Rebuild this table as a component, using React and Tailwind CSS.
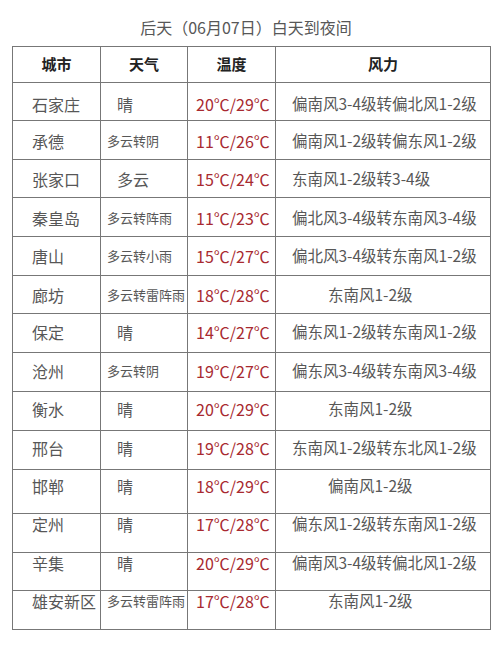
import React from 'react';

// 列定义：城市 / 天气 / 温度 / 风力
const rows = [
  { city: '石家庄', w: '晴', temp: '20℃/29℃', wind: '偏南风3-4级转偏北风1-2级', h: 'h-[38px]', pt: 'pt-[11px]' },
  { city: '承德', w: '多云转阴', temp: '11℃/26℃', wind: '偏南风1-2级转偏东风1-2级', h: 'h-[39px]', pt: 'pt-[10px]' },
  { city: '张家口', w: '多云', temp: '15℃/24℃', wind: '东南风1-2级转3-4级', h: 'h-[38px]', pt: 'pt-[9px]' },
  { city: '秦皇岛', w: '多云转阵雨', temp: '11℃/23℃', wind: '偏北风3-4级转东南风3-4级', h: 'h-[39px]', pt: 'pt-[10px]' },
  { city: '唐山', w: '多云转小雨', temp: '15℃/27℃', wind: '偏北风3-4级转东南风1-2级', h: 'h-[39px]', pt: 'pt-[9px]' },
  { city: '廊坊', w: '多云转雷阵雨', temp: '18℃/28℃', wind: '东南风1-2级', short: true, h: 'h-[38px]', pt: 'pt-[9px]' },
  { city: '保定', w: '晴', temp: '14℃/27℃', wind: '偏东风1-2级转东南风1-2级', h: 'h-[39px]', pt: 'pt-[8px]' },
  { city: '沧州', w: '多云转阴', temp: '19℃/27℃', wind: '偏东风3-4级转东南风3-4级', h: 'h-[39px]', pt: 'pt-[8px]' },
  { city: '衡水', w: '晴', temp: '20℃/29℃', wind: '东南风1-2级', short: true, h: 'h-[39px]', pt: 'pt-[7px]' },
  { city: '邢台', w: '晴', temp: '19℃/28℃', wind: '东南风1-2级转东北风1-2级', h: 'h-[39px]', pt: 'pt-[7px]' },
  { city: '邯郸', w: '晴', temp: '18℃/29℃', wind: '偏南风1-2级', short: true, h: 'h-[44px]', pt: 'pt-[6px]' },
  { city: '定州', w: '晴', temp: '17℃/28℃', wind: '偏东风1-2级转东南风1-2级', h: 'h-[39px]', pt: 'pt-0' },
  { city: '辛集', w: '晴', temp: '20℃/29℃', wind: '偏南风3-4级转偏北风1-2级', h: 'h-[38px]', pt: 'pt-0' },
  { city: '雄安新区', w: '多云转雷阵雨', temp: '17℃/28℃', wind: '东南风1-2级', short: true, h: 'h-[39px]', pt: 'pt-0' },
];

const grid = 'grid grid-cols-[88px_87px_88px_215px]';

function Row({ r }) {
  const small = r.w.length > 2;
  return (
    <div className={`${grid} ${r.h} border-b border-[#777]`}>
      <div className={`border-r border-[#777] pl-[19px] ${r.pt}`}>
        <div className="h-[20px] flex items-center text-[16px]">{r.city}</div>
      </div>
      <div className={`border-r border-[#777] ${small ? 'pl-[6px]' : 'pl-[16px]'} ${r.pt}`}>
        <div className={`h-[20px] flex items-center ${small ? 'text-[13px]' : 'text-[16px]'}`}>{r.w}</div>
      </div>
      <div className={`border-r border-[#777] pl-[8px] ${r.pt}`}>
        <div className="h-[20px] flex items-center text-[16px] text-[#a82a30]">{r.temp}</div>
      </div>
      <div className={`border-r border-[#777] ${r.short ? 'pl-[52px]' : 'pl-[16px]'} ${r.pt}`}>
        <div className="h-[20px] flex items-center text-[15.5px]">{r.wind}</div>
      </div>
    </div>
  );
}

export default function App() {
  return (
    <div
      className="w-[500px] h-[646px] bg-white text-[#575757] overflow-hidden"
      style={{ fontFamily: '"Noto Sans CJK SC", sans-serif' }}
    >
      <div className="h-[46px] pt-[17px] pr-[8px] text-center text-[16px] leading-[20px]">
        后天（06月07日）白天到夜间
      </div>
      <div className="ml-[12px] w-[479px] border-l border-t border-[#777]">
        <div className={`${grid} h-[36px] border-b border-[#777] font-bold text-[15px] text-[#222]`}>
          <div className="border-r border-[#777] flex items-center justify-center">城市</div>
          <div className="border-r border-[#777] flex items-center justify-center">天气</div>
          <div className="border-r border-[#777] flex items-center justify-center">温度</div>
          <div className="border-r border-[#777] flex items-center justify-center">风力</div>
        </div>
        {rows.map((r) => (
          <Row key={r.city} r={r} />
        ))}
      </div>
    </div>
  );
}
